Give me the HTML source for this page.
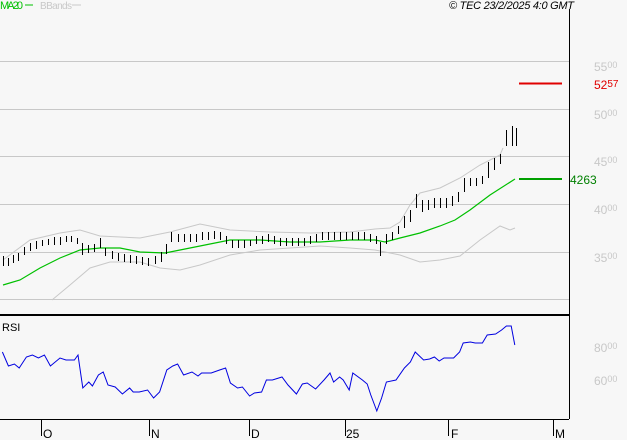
<!DOCTYPE html>
<html><head><style>
body{margin:0;background:#f7f7f7;}
svg{display:block;font-family:"Liberation Sans",sans-serif;}
</style></head><body>
<svg width="627" height="440" viewBox="0 0 627 440" xmlns="http://www.w3.org/2000/svg">
<rect width="627" height="440" fill="#f7f7f7"/>
<g stroke="#c8c8c8" stroke-width="1">
<line x1="0" y1="61.5" x2="569" y2="61.5"/>
<line x1="0" y1="109.5" x2="569" y2="109.5"/>
<line x1="0" y1="156.5" x2="569" y2="156.5"/>
<line x1="0" y1="204.5" x2="569" y2="204.5"/>
<line x1="0" y1="252.5" x2="569" y2="252.5"/>
<line x1="0" y1="299.5" x2="569" y2="299.5"/>
</g>
<line x1="569.5" y1="9" x2="569.5" y2="419" stroke="#000"/>
<line x1="0" y1="315" x2="569" y2="315" stroke="#000" stroke-width="2"/>
<line x1="0" y1="419.5" x2="569" y2="419.5" stroke="#000"/>
<g stroke="#000">
<line x1="41.5" y1="419" x2="41.5" y2="436"/>
<line x1="149.5" y1="419" x2="149.5" y2="436"/>
<line x1="249.5" y1="419" x2="249.5" y2="436"/>
<line x1="345.5" y1="419" x2="345.5" y2="436"/>
<line x1="448.5" y1="419" x2="448.5" y2="436"/>
<line x1="553.5" y1="419" x2="553.5" y2="436"/>
</g>
<g font-size="12" fill="#000">
<text x="43" y="438">O</text><text x="151" y="438">N</text><text x="251" y="438">D</text>
<text x="346" y="438">25</text><text x="451" y="438">F</text><text x="555" y="438">M</text>
</g>
<text x="0" y="9" font-size="11" fill="#00c000" textLength="23">MA20</text>
<line x1="25" y1="5" x2="33" y2="5" stroke="#00c000"/>
<text x="40" y="9" font-size="10" fill="#c8c8c8" textLength="32">BBands</text>
<line x1="72" y1="5" x2="81" y2="5" stroke="#c8c8c8"/>
<text x="449" y="9" font-size="11" font-style="italic" fill="#000" textLength="125">© TEC 23/2/2025 4:0 GMT</text>
<g fill="#c8c8c8" font-size="12">
<text x="594" y="71">55<tspan font-size="9" dy="-3">00</tspan></text>
<text x="594" y="119">50<tspan font-size="9" dy="-3">00</tspan></text>
<text x="594" y="166">45<tspan font-size="9" dy="-3">00</tspan></text>
<text x="594" y="214">40<tspan font-size="9" dy="-3">00</tspan></text>
<text x="594" y="262">35<tspan font-size="9" dy="-3">00</tspan></text>
<text x="594" y="352">80<tspan font-size="9" dy="-3">00</tspan></text>
<text x="594" y="385">60<tspan font-size="9" dy="-3">00</tspan></text>
</g>
<line x1="519" y1="83.5" x2="562" y2="83.5" stroke="#e00000" stroke-width="2"/>
<text x="594" y="89" font-size="12" fill="#e00000">52<tspan font-size="10" dy="-2">57</tspan></text>
<line x1="519" y1="179" x2="562" y2="179" stroke="#00a000" stroke-width="2"/>
<text x="570" y="184" font-size="12" fill="#008000">4263</text>
<polyline fill="none" stroke="#c8c8c8" points="3,260 30,240 60,233 80,230 100,236 140,238 170,232 200,224 230,230 270,232 310,233 350,232 375,229 390,228 400,222 410,205 420,193 440,188 460,178 480,165 500,155 503,148"/>
<polyline fill="none" stroke="#c8c8c8" points="52,300 70,285 90,268 110,262 140,262 160,268 180,270 200,265 230,255 260,250 290,248 320,246 350,248 375,250 385,252 400,255 420,262 440,260 460,256 480,240 500,226 510,230 515,228"/>
<polyline fill="none" stroke="#00c000" stroke-width="1.2" points="3,285 20,280 40,268 60,258 80,250 100,248 120,248 140,252 165,253 180,250 200,246 230,240 260,240 290,242 320,242 350,240 375,240 385,242 400,238 420,233 440,226 455,220 470,210 490,195 515,179"/>
<g stroke="#000" shape-rendering="crispEdges" transform="translate(0.5,0)">
<path d="M3 256v10M8 258v8M13 255v8M18 253v8M24 247v8M30 243v8M36 241v8M42 240v6M48 239v6M54 237v8M60 237v8M66 236v6M71 236v6M77 238v6M82 243v12M88 245v8M94 244v8M100 238v10M105 248v8M112 251v8M118 253v8M124 254v8M130 255v8M136 256v8M142 257v8M148 258v8M155 256v8M161 252v10M166 244v10M171 232v10M178 234v8M184 234v8M190 234v8M196 234v8M202 232v8M208 232v8M214 231v8M220 232v8M226 236v8M232 240v8M238 240v8M244 240v8M250 240v6M256 236v8M262 236v8M268 234v8M274 236v8M280 238v8M286 238v8M292 238v8M298 238v8M304 238v8M310 236v8M316 234v8M322 232v8M328 232v8M334 232v8M340 232v8M346 232v8M352 232v8M358 232v8M364 232v8M370 234v8M376 236v8M380 242v14M386 234v10M392 232v8M398 226v8M404 216v12M410 210v12M416 194v14M422 200v12M428 200v10M434 198v10M440 198v10M446 198v10M452 196v10M458 192v10M464 178v14M470 178v8M476 178v8M482 176v8M488 162v16M494 158v12M500 154v10M506 130v16M512 126v20M516 128v18"/>
</g>
<text x="2" y="331" font-size="11" fill="#000">RSI</text>
<polyline fill="none" stroke="#0000e0" stroke-width="1" points="2.4,352 8.4,366 14.4,364 19.2,368 26.4,357 32.4,355 38.4,358 44.4,355 50.4,366 60,358 66,360 74.4,360 78,355 82.8,388 88.8,382 92.4,386 98.4,375 103.2,372 108,385 115.2,387 122.4,394 129.6,388 133.2,392 139.2,392 147.6,390 153.6,398 159.6,392 166.8,370 172.8,366 177.6,364 183.6,375 192,372 198,376 201.6,373 211.2,373 219.6,370 225.6,368 230.4,383 237.6,388 242.4,387 249.6,396 254.4,393 261.6,392 266.4,380 272.4,380 282,377 288,385 296.4,394 302.4,384 307.2,383 315.6,389 324,380 330,373 333.6,382 339.6,377 343.2,380 349.2,390 352.8,373 362.4,380 367.2,384 370.8,395 376.8,411 381.6,398 386.4,382 396,380 404.4,368 410.4,362 415.2,352 423.6,360 429.6,359 434.4,357 439.2,361 444,358 453.6,358 459.6,352 463.2,343 470.4,342 475.2,343 482.4,343 487.2,335 495.6,334 501.6,330 506.4,326 511.2,326 514.8,345"/>
</svg>
</body></html>
